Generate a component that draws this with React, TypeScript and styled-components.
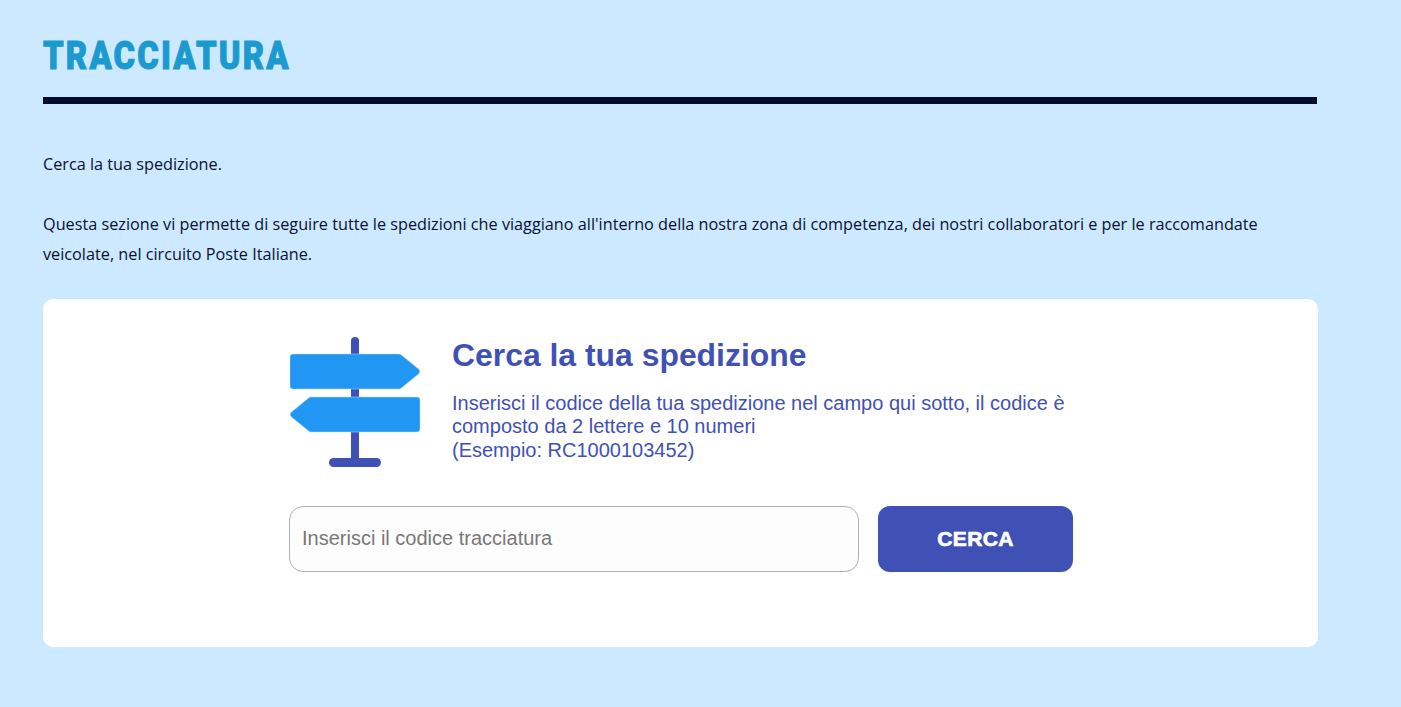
import styled, { createGlobalStyle } from 'styled-components';

const GlobalStyle = createGlobalStyle`
  html, body {
    margin: 0;
    padding: 0;
    background: #cce9ff;
    overflow: hidden;
  }
`;

const Page = styled.main`
  box-sizing: border-box;
  width: 1318px;
  min-height: 707px;
  padding: 34px 0 0 43px;
  font-family: "Open Sans", sans-serif;
  color: #0b1033;
`;

const Title = styled.h1`
  margin: 0;
  height: 63px;
  font-family: "Roboto", sans-serif;
  font-size: 39px;
  line-height: 44px;
  font-weight: 900;
  letter-spacing: 2.6px;
  color: #1b9ad0;
  -webkit-text-stroke: 1px #1b9ad0;
  transform: scaleX(0.84);
  transform-origin: left center;
`;

const Rule = styled.hr`
  margin: 0 1px 45px 0;
  border: 0;
  height: 7px;
  background: #020c33;
`;

const Paragraph = styled.p`
  margin: 0 0 30px;
  font-size: 16.24px;
  line-height: 30px;
`;

const Card = styled.section`
  box-sizing: border-box;
  height: 348px;
  margin-top: 30px;
  padding-top: 38px;
  background: #fff;
  border-radius: 10px;
  display: flex;
  justify-content: center;
`;

const Inner = styled.div`
  width: 784px;
  display: flex;
  flex-direction: column;
  gap: 39px;
  margin-left: 1px;
`;

const Intro = styled.div`
  display: flex;
  gap: 30px;
  height: 130px;
`;

const Copy = styled.div`
  width: 625px;
  font-family: "Liberation Sans", Arial, sans-serif;
  color: #3f51b5;
`;

const Heading = styled.h2`
  margin: 0 0 18.8px;
  font-size: 31.9px;
  line-height: 36px;
  font-weight: 700;
`;

const Help = styled.p`
  margin: 0;
  font-size: 20px;
  line-height: 23.5px;
`;

const SearchRow = styled.form`
  display: flex;
  gap: 19px;
`;

const CodeInput = styled.input`
  box-sizing: border-box;
  width: 570px;
  height: 66px;
  padding: 0 12px 2px;
  border: 1px solid #b0b0b0;
  border-radius: 14px;
  background: #fdfdfd;
  font-family: "Liberation Sans", Arial, sans-serif;
  font-size: 20px;
  outline: none;

  &::placeholder {
    color: #7a7777;
    opacity: 1;
  }
`;

const SearchButton = styled.button`
  width: 195px;
  height: 66px;
  border: 0;
  border-radius: 12px;
  background: #3f51b5;
  color: #fff;
  font-family: "Liberation Sans", Arial, sans-serif;
  font-size: 21px;
  font-weight: 700;
  -webkit-text-stroke: 0.7px #fff;
  letter-spacing: 0.4px;
`;

const Signpost = styled.svg`
  flex: none;
  margin-left: 1px;
  overflow: visible;
`;

function SignpostIcon() {
  return (
    <Signpost width="132" height="130" viewBox="0 0 132 130">
      <rect x="61" y="0" width="8" height="128" rx="4" fill="#3f51b5" />
      <rect x="39" y="121" width="52" height="9" rx="4.5" fill="#3f51b5" />
      <path
        d="M3 17h106a3 3 0 0 1 1.8.6l17.8 14.5a3 3 0 0 1 0 4.8l-17.8 14.5a3 3 0 0 1-1.8.6H3a3 3 0 0 1-3-3V20a3 3 0 0 1 3-3z"
        fill="#2196f3"
        stroke="#bbdefb"
        strokeWidth="0.5"
      />
      <path
        d="M127 60H21a3 3 0 0 0-1.8.6L1.4 75.1a3 3 0 0 0 0 4.8l17.8 14.5a3 3 0 0 0 1.8.6h106a3 3 0 0 0 3-3V63a3 3 0 0 0-3-3z"
        fill="#2196f3"
        stroke="#bbdefb"
        strokeWidth="0.5"
      />
    </Signpost>
  );
}

export default function App() {
  return (
    <>
      <GlobalStyle />
      <Page>
        <Title>TRACCIATURA</Title>
        <Rule />
        <Paragraph>Cerca la tua spedizione.</Paragraph>
        <Paragraph>
          Questa sezione vi permette di seguire tutte le spedizioni che viaggiano all'interno della nostra zona di
          competenza, dei nostri collaboratori e per le raccomandate veicolate, nel circuito Poste Italiane.
        </Paragraph>
        <Card>
          <Inner>
            <Intro>
              <SignpostIcon />
              <Copy>
                <Heading>Cerca la tua spedizione</Heading>
                <Help>
                  Inserisci il codice della tua spedizione nel campo qui sotto, il codice è composto da 2 lettere e 10
                  numeri
                  <br />
                  (Esempio: RC1000103452)
                </Help>
              </Copy>
            </Intro>
            <SearchRow>
              <CodeInput placeholder="Inserisci il codice tracciatura" />
              <SearchButton type="button">CERCA</SearchButton>
            </SearchRow>
          </Inner>
        </Card>
      </Page>
    </>
  );
}
